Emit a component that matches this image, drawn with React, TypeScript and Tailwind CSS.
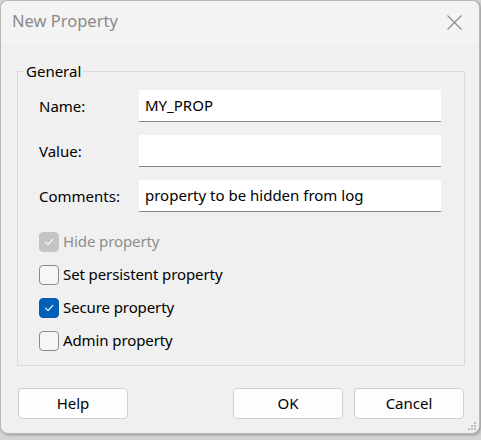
import React from 'react';

const font = { fontFamily: '"Noto Sans", "Open Sans", sans-serif' };

function Check({ color }: { color: string }) {
  return (
    <svg width="12" height="12" viewBox="0 0 12 12" fill="none">
      <polyline points="2.5,6.2 5,8.6 9.8,3.4" stroke={color} strokeWidth="1.1" strokeLinecap="round" strokeLinejoin="round" />
    </svg>
  );
}

function CheckRow({ label, state }: { label: string; state: 'off' | 'on' | 'disabled' }) {
  let box = 'border border-[#8b8b8b] bg-[#f6f6f6]';
  if (state === 'on') box = 'bg-[#005fb8] border border-[#005fb8]';
  if (state === 'disabled') box = 'bg-[#c5c5c5] border border-[#c5c5c5]';
  return (
    <div className="flex items-center h-[33px]">
      <div className={`w-[20px] h-[20px] rounded-[4px] flex items-center justify-center ${box}`}>
        {state !== 'off' && <Check color="#ffffff" />}
      </div>
      <span className={`ml-[4px] text-[15px] tracking-[-0.1px] ${state === 'disabled' ? 'text-[#8d8d8d]' : 'text-black'}`}>{label}</span>
    </div>
  );
}

function Field({ label, value }: { label: string; value: string }) {
  return (
    <div className="flex items-center">
      <label className="w-[100px] text-[15px] text-black">{label}</label>
      <div className="w-[302px] h-[32px] bg-white border-b border-[#868686] flex items-center px-[6px] text-[15px] text-black">
        {value}
      </div>
    </div>
  );
}

export default function App() {
  return (
    <div className="w-[481px] h-[440px] bg-[#d4d4d4] overflow-hidden" style={font}>
      <div className="w-[480px] h-[434px] rounded-[8px] border border-[#b9b9b9] bg-[#f0f0f0] flex flex-col overflow-hidden shadow-[1px_1px_3px_rgba(0,0,0,0.3)]">
        {/* Title bar */}
        <div className="h-[43px] shrink-0 bg-[#f3f3f3] flex items-center justify-between pl-[11px] pr-[17px]">
          <span className="text-[16.5px] text-[#8a8a8a] pb-[2px]">New Property</span>
          <svg width="15" height="15" viewBox="0 0 15 15" fill="none">
            <path d="M0.5 0.5 L14.5 14.5 M14.5 0.5 L0.5 14.5" stroke="#8a8a8a" strokeWidth="1.1" />
          </svg>
        </div>

        {/* Body */}
        <div className="flex-1 flex flex-col px-[16px] pt-[18px]">
          <fieldset className="border border-[#dadada] w-[448px] h-[304px] px-[21px] pt-[10px] m-0">
            <legend className="ml-[-15px] px-[2px] text-[15px] text-black leading-[18px]">General</legend>
            <div className="flex flex-col gap-[13px]">
              <Field label="Name:" value="MY_PROP" />
              <Field label="Value:" value="" />
              <Field label="Comments:" value="property to be hidden from log" />
            </div>
            <div className="flex flex-col mt-[13px]">
              <CheckRow label="Hide property" state="disabled" />
              <CheckRow label="Set persistent property" state="off" />
              <CheckRow label="Secure property" state="on" />
              <CheckRow label="Admin property" state="off" />
            </div>
          </fieldset>

          <div className="flex items-center mt-[22px] pl-[1px]">
            <button className="w-[110px] h-[31px] rounded-[4px] border border-[#d0d0d0] bg-[#fdfdfd] text-[15px] text-black">Help</button>
            <div className="flex-1" />
            <button className="w-[110px] h-[31px] rounded-[4px] border border-[#d0d0d0] bg-[#fdfdfd] text-[15px] text-black">OK</button>
            <button className="w-[110px] h-[31px] ml-[11px] rounded-[4px] border border-[#d0d0d0] bg-[#fdfdfd] text-[15px] text-black mr-[-1px]">Cancel</button>
          </div>

          <div className="flex-1 flex items-end justify-end pb-[2px] mr-[-14px]">
            <svg width="9" height="9" viewBox="0 0 9 9">
              <rect x="6" y="0" width="2" height="2" fill="#bcbcbc" />
              <rect x="3" y="3" width="2" height="2" fill="#bcbcbc" />
              <rect x="6" y="3" width="2" height="2" fill="#bcbcbc" />
              <rect x="0" y="6" width="2" height="2" fill="#bcbcbc" />
              <rect x="3" y="6" width="2" height="2" fill="#bcbcbc" />
              <rect x="6" y="6" width="2" height="2" fill="#bcbcbc" />
            </svg>
          </div>
        </div>
      </div>
    </div>
  );
}
